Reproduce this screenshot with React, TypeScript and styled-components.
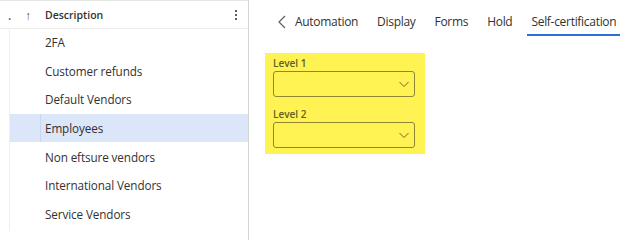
import React from "react";
import styled, { createGlobalStyle } from "styled-components";

const GlobalStyle = createGlobalStyle`
  html, body {
    margin: 0;
    padding: 0;
    background: #ffffff;
  }
  body {
    font-family: "Open Sans", "Noto Sans", sans-serif;
    color: #323130;
  }
`;

const groups = [
  "2FA",
  "Customer refunds",
  "Default Vendors",
  "Employees",
  "Non eftsure vendors",
  "International Vendors",
  "Service Vendors",
];

const Page = styled.div`
  display: flex;
  width: 627px;
  height: 240px;
  overflow: hidden;
`;

const ListPane = styled.div`
  width: 248px;
  flex-shrink: 0;
  border-right: 1px solid #d4d4d4;
  border-top: 1px solid #e6e6e6;
  display: flex;
  flex-direction: column;
`;

const HeaderRow = styled.div`
  display: flex;
  align-items: center;
  height: 26px;
  padding-top: 1px;
  box-sizing: content-box;
  border-bottom: 1px solid #edebe9;
  font-size: 10.5px;
  font-weight: 600;
  color: #323130;
`;

const Dot = styled.span`
  width: 24px;
  padding-left: 8px;
  box-sizing: border-box;
  font-size: 12px;
  color: #605e5c;
`;

const SortArrow = styled.span`
  width: 21px;
  padding-left: 1px;
  box-sizing: border-box;
  color: #605e5c;
  font-weight: 400;
  font-size: 12px;
`;

const HeaderLabel = styled.span`
  flex: 1;
`;

const MoreDots = styled.span`
  width: 16px;
  display: flex;
  flex-direction: column;
  align-items: center;
  gap: 2px;
  margin-right: 4px;
  & > i {
    width: 2px;
    height: 2px;
    background: #605e5c;
  }
`;

const Rows = styled.div`
  margin-left: 9px;
  margin-top: -1px;
  border-left: 1px solid #efefef;
  height: 203px;
`;

const Row = styled.div<{ $selected?: boolean }>`
  height: 28.6px;
  display: flex;
  align-items: center;
  font-size: 11.7px;
  letter-spacing: -0.1px;
  white-space: nowrap;
  background: ${(p) => (p.$selected ? "#dce6f9" : "transparent")};
`;

const RowGutter = styled.span<{ $selected?: boolean }>`
  width: 30px;
  height: 100%;
  border-right: 1px solid ${(p) => (p.$selected ? "#ccd7ec" : "transparent")};
`;

const RowText = styled.span`
  padding-left: 4px;
`;

const DetailPane = styled.div`
  flex: 1;
  padding-left: 16px;
`;

const Tabs = styled.div`
  display: flex;
  align-items: flex-end;
  height: 36px;
`;

const Back = styled.span`
  width: 14px;
  height: 28px;
  margin-left: 12px;
  display: flex;
  align-items: center;
`;

const Tab = styled.span<{ $active?: boolean }>`
  font-size: 12px;
  letter-spacing: -0.3px;
  padding: 0 4px;
  margin-right: 11px;
  height: 28px;
  white-space: nowrap;
  display: flex;
  align-items: center;
  box-sizing: border-box;
  border-bottom: 2px solid ${(p) => (p.$active ? "#2f6fdc" : "transparent")};
  color: #323130;
`;

const Highlight = styled.div`
  margin-top: 17px;
  width: 160px;
  background: #fef352;
  padding: 3px 0 6px 8px;
  box-sizing: border-box;
`;

const Field = styled.div`
  display: flex;
  flex-direction: column;
  & + & {
    margin-top: 10px;
  }
`;

const Label = styled.label`
  font-size: 10px;
  font-weight: 600;
  color: #605e28;
  height: 15px;
  line-height: 15px;
`;

const Select = styled.div`
  width: 142px;
  height: 26px;
  box-sizing: border-box;
  border: 1px solid #8d8733;
  border-radius: 3px;
  display: flex;
  align-items: center;
  justify-content: flex-end;
  padding-right: 4px;
`;

const Chevron = () => (
  <svg width="12" height="12" viewBox="0 0 12 12">
    <path d="M1.5 4 L6 8.5 L10.5 4" fill="none" stroke="#6b6628" strokeWidth="1" />
  </svg>
);

const App = () => {
  return (
    <Page>
      <GlobalStyle />
      <ListPane>
        <HeaderRow>
          <Dot>.</Dot>
          <SortArrow>↑</SortArrow>
          <HeaderLabel>Description</HeaderLabel>
          <MoreDots>
            <i />
            <i />
            <i />
          </MoreDots>
        </HeaderRow>
        <Rows>
          {groups.map((g) => (
            <Row key={g} $selected={g === "Employees"}>
              <RowGutter $selected={g === "Employees"} />
              <RowText>{g}</RowText>
            </Row>
          ))}
        </Rows>
      </ListPane>
      <DetailPane>
        <Tabs>
          <Back>
            <svg width="10" height="16" viewBox="0 0 10 16">
              <path d="M8 2 L2 8 L8 14" fill="none" stroke="#605e5c" strokeWidth="1.2" />
            </svg>
          </Back>
          <Tab>Automation</Tab>
          <Tab>Display</Tab>
          <Tab>Forms</Tab>
          <Tab>Hold</Tab>
          <Tab $active>Self-certification</Tab>
        </Tabs>
        <Highlight>
          <Field>
            <Label>Level 1</Label>
            <Select>
              <Chevron />
            </Select>
          </Field>
          <Field>
            <Label>Level 2</Label>
            <Select>
              <Chevron />
            </Select>
          </Field>
        </Highlight>
      </DetailPane>
    </Page>
  );
};

export default App;
